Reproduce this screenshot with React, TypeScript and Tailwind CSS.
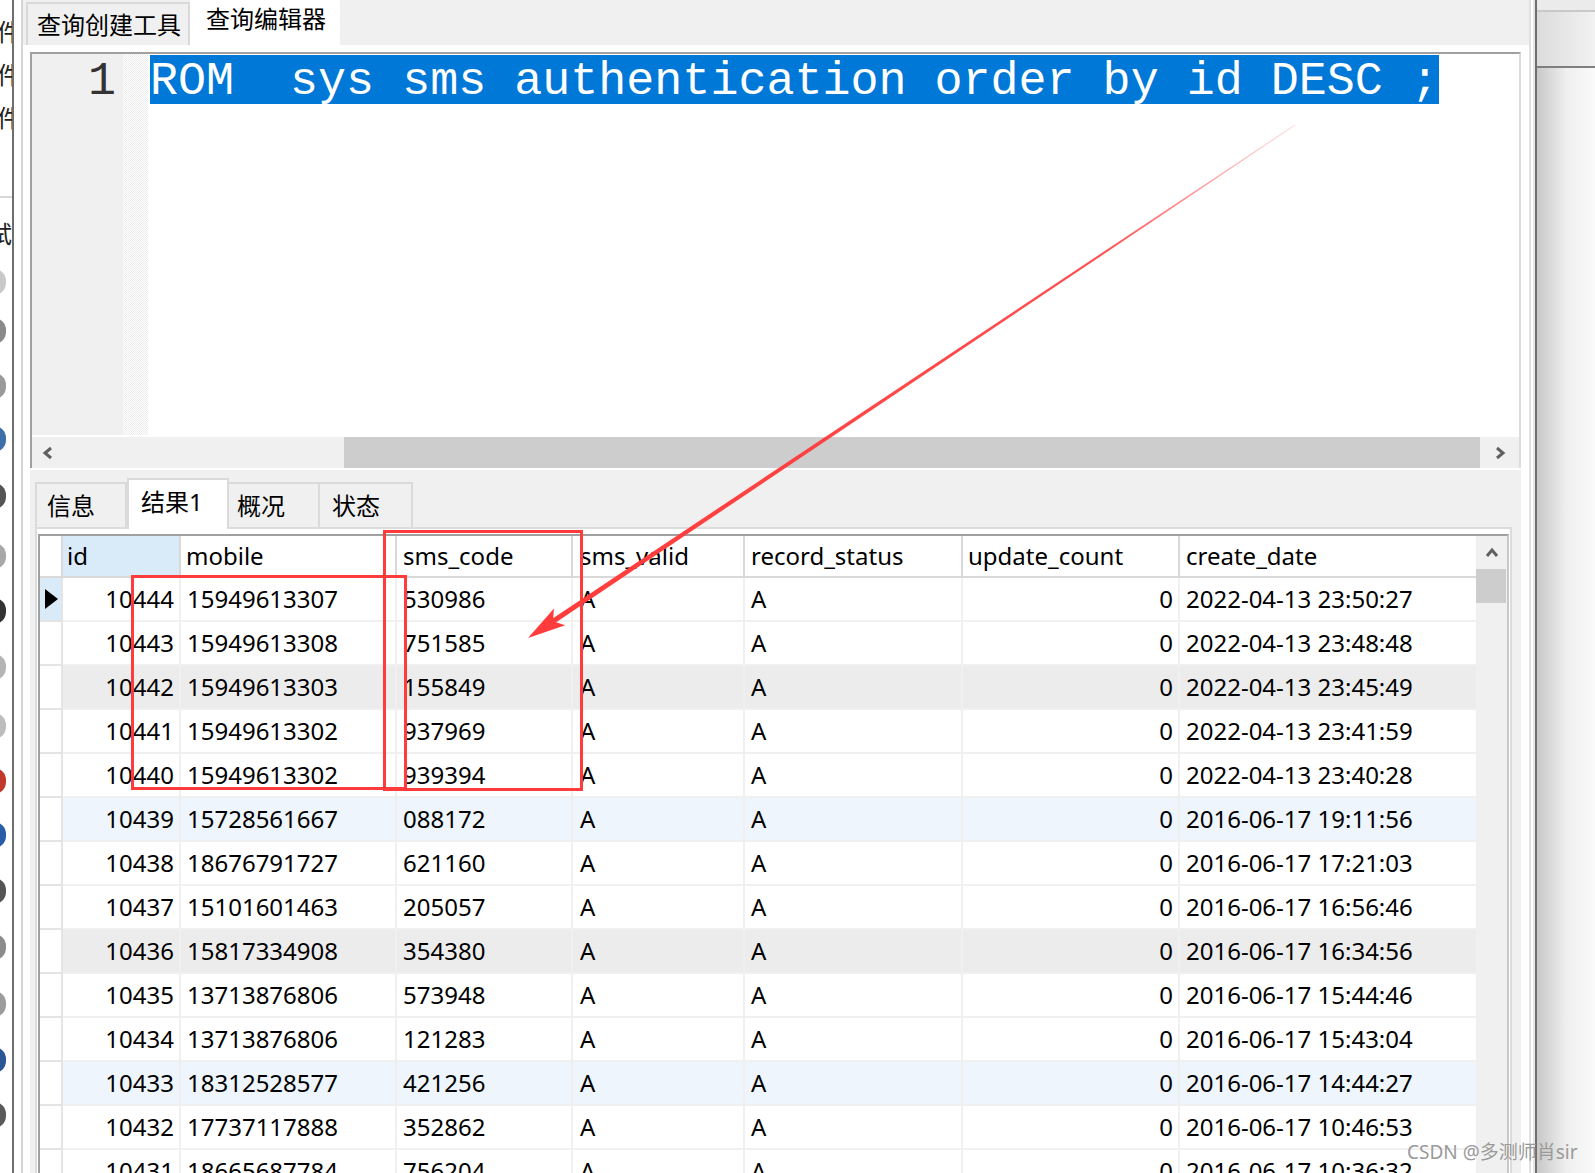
import React from "react";

const rows: [string, string, string, string][] = [
  ["10444", "15949613307", "530986", "2022-04-13 23:50:27"],
  ["10443", "15949613308", "751585", "2022-04-13 23:48:48"],
  ["10442", "15949613303", "155849", "2022-04-13 23:45:49"],
  ["10441", "15949613302", "937969", "2022-04-13 23:41:59"],
  ["10440", "15949613302", "939394", "2022-04-13 23:40:28"],
  ["10439", "15728561667", "088172", "2016-06-17 19:11:56"],
  ["10438", "18676791727", "621160", "2016-06-17 17:21:03"],
  ["10437", "15101601463", "205057", "2016-06-17 16:56:46"],
  ["10436", "15817334908", "354380", "2016-06-17 16:34:56"],
  ["10435", "13713876806", "573948", "2016-06-17 15:44:46"],
  ["10434", "13713876806", "121283", "2016-06-17 15:43:04"],
  ["10433", "18312528577", "421256", "2016-06-17 14:44:27"],
  ["10432", "17737117888", "352862", "2016-06-17 10:46:53"],
  ["10431", "18665687784", "756204", "2016-06-17 10:36:32"],
];

const rowBg: Record<number, string> = {
  2: "bg-[#ececec]",
  8: "bg-[#ececec]",
  5: "bg-[#eef5fd]",
  11: "bg-[#eef5fd]",
};

// partly hidden icons of the window behind, at the left edge
const sideIcons = [
  { h: "h-[40px]", c: "bg-[#c9c9c9]" },
  { h: "h-[57px]", c: "bg-[#8a8a8a]" },
  { h: "h-[53px]", c: "bg-[#9a9a9a]" },
  { h: "h-[53px]", c: "bg-[#3d6fa8]" },
  { h: "h-[62px]", c: "bg-[#555555]" },
  { h: "h-[57px]", c: "bg-[#a8a8a8]" },
  { h: "h-[53px]", c: "bg-[#333333]" },
  { h: "h-[60px]", c: "bg-[#b5b5b5]" },
  { h: "h-[57px]", c: "bg-[#bdbdbd]" },
  { h: "h-[53px]", c: "bg-[#c0392b]" },
  { h: "h-[56px]", c: "bg-[#2a5ca8]" },
  { h: "h-[56px]", c: "bg-[#555555]" },
  { h: "h-[56px]", c: "bg-[#8c8c8c]" },
  { h: "h-[57px]", c: "bg-[#9c9c9c]" },
  { h: "h-[55px]", c: "bg-[#2b5797]" },
  { h: "h-[55px]", c: "bg-[#5a5a5a]" },
];

function Chevron({ dir }: { dir: "left" | "right" | "up" }) {
  const pts =
    dir === "left" ? "9,2 3,7 9,12" : dir === "right" ? "3,2 9,7 3,12" : "2,9 7,3 12,9";
  return (
    <svg width={dir === "up" ? 14 : 12} height={dir === "up" ? 12 : 14} viewBox={dir === "up" ? "0 0 14 12" : "0 0 12 14"}>
      <polyline points={pts} fill="none" stroke="#606060" strokeWidth={3} />
    </svg>
  );
}

// the underscores of the selected line sit on the lower edge of the selection
function Us() {
  return <span className="relative top-[9px]">_</span>;
}

export default function App() {
  return (
    <div className="relative flex h-[1173px] w-[1595px] overflow-hidden bg-white font-['Noto_Sans','Noto_Sans_CJK_SC',sans-serif] text-black">
      {/* left edge of the window behind */}
      <div className="flex w-[12px] flex-col overflow-hidden bg-white text-[24px] leading-none text-[#222]">
        <div className="h-[20px]" />
        <div className="-ml-[3px] h-[43px] whitespace-nowrap">件</div>
        <div className="-ml-[3px] h-[43px] whitespace-nowrap">件</div>
        <div className="-ml-[3px] h-[90px] whitespace-nowrap">件</div>
        <div className="h-[2px] bg-[#d8d8d8]" />
        <div className="h-[24px]" />
        <div className="-ml-[12px] h-[40px] whitespace-nowrap">试</div>
        {sideIcons.map((s, i) => (
          <div key={i} className={`${s.h} flex items-center`}>
            <div className={`-ml-[18px] h-[26px] w-[24px] shrink-0 rounded-full ${s.c}`} />
          </div>
        ))}
      </div>
      <div className="w-[2px] bg-[#6e6e6e]" />

      {/* main window */}
      <div className="flex w-[1521px]">
        <div className="w-[7px] bg-white" />
        <div className="w-[2px] bg-[#d5d5d5]" />
        <div className="flex w-[1506px] flex-col">
          {/* top tabs */}
          <div className="flex h-[45px] items-end bg-[#f0f0f0] pl-[3px]">
            <div className="flex h-[43px] w-[164px] items-center border-2 border-b-0 border-[#d9d9d9] pl-[9px] text-[24px] leading-none">
              查询创建工具
            </div>
            <div className="flex h-[45px] w-[150px] items-start bg-white pl-[16px] pt-[7px] text-[24px] leading-none">
              查询编辑器
            </div>
          </div>

          {/* white frame */}
          <div className="flex min-h-0 flex-1 flex-col bg-white pl-[7px] pr-[8px] pt-[7px]">
            {/* editor */}
            <div className="flex h-[416px] flex-col border-l-2 border-r-2 border-t-2 border-l-[#a0a0a0] border-r-[#dcdcdc] border-t-[#a0a0a0]">
              <div className="flex h-[381px]">
                <div className="w-[91px] bg-[#f0f0f0] pr-[7px] pt-[2px] text-right font-['Liberation_Mono',monospace] text-[46.7px] leading-[51px] text-[#333]">
                  1
                </div>
                <div className="w-[25px] bg-[repeating-conic-gradient(#ececec_0_25%,#ffffff_0_50%)] bg-[length:2px_2px]" />
                <div className="flex-1 overflow-hidden pl-[2px] pt-[1px]">
                  <span className="inline-block h-[49px] whitespace-pre bg-[#0078d7] font-['Liberation_Mono',monospace] text-[46.7px] leading-[53px] text-white">
                    ROM  sys<Us />sms<Us />authentication order by id DESC ;
                  </span>
                </div>
              </div>
              <div className="h-[2px] bg-white" />
              <div className="flex h-[31px] bg-[#f0f0f0]">
                <div className="flex w-[32px] items-center justify-center">
                  <Chevron dir="left" />
                </div>
                <div className="flex flex-1 pl-[280px]">
                  <div className="h-full flex-1 bg-[#cdcdcd]" />
                </div>
                <div className="flex w-[39px] items-center justify-center">
                  <Chevron dir="right" />
                </div>
              </div>
            </div>

            {/* results */}
            <div className="mt-[2px] flex min-h-0 flex-1 flex-col bg-[#f0f0f0] pl-[5px]">
              <div className="mt-[8px] flex h-[49px] items-end text-[24px] leading-none">
                <div className="flex h-[45px] w-[92px] items-center border-2 border-b-0 border-[#dadada] pl-[10px]">信息</div>
                <div className="relative z-10 -mb-[2px] flex h-[51px] w-[102px] items-start border-2 border-b-0 border-[#dadada] bg-white pl-[12px] pt-[10px]">
                  结果1
                </div>
                <div className="flex h-[45px] w-[91px] items-center border-2 border-b-0 border-l-0 border-[#dadada] pl-[8px]">概况</div>
                <div className="flex h-[45px] w-[93px] items-center border-2 border-b-0 border-l-0 border-[#dadada] pl-[12px]">状态</div>
              </div>

              <div className="min-h-0 w-[1477px] flex-1 overflow-hidden border-2 border-b-0 border-[#dcdcdc] bg-white pl-[1px] pr-[1px] pt-[5px]">
                <div className="flex h-full border-l-2 border-r-2 border-t-2 border-l-[#a0a0a0] border-r-[#c8c8c8] border-t-[#a0a0a0]">
                  <div className="flex w-[1436px] flex-col text-[24px] leading-none">
                    {/* header */}
                    <div className="flex h-[42px] shrink-0 border-b-2 border-[#d9d9d9]">
                      <div className="w-[23px] border-r-2 border-[#d9d9d9]" />
                      <div className="flex w-[118px] items-center border-r-2 border-[#d9d9d9] bg-[#d9eaf9] pl-[4px]">id</div>
                      <div className="flex w-[216px] items-center border-r-2 border-[#d9d9d9] pl-[5px]">mobile</div>
                      <div className="flex w-[176px] items-center border-r-2 border-[#d9d9d9] pl-[6px]">sms_code</div>
                      <div className="flex w-[172px] items-center border-r-2 border-[#d9d9d9] pl-[7px]">sms_valid</div>
                      <div className="flex w-[218px] items-center border-r-2 border-[#d9d9d9] pl-[6px]">record_status</div>
                      <div className="flex w-[217px] items-center border-r-2 border-[#d9d9d9] pl-[5px]">update_count</div>
                      <div className="flex flex-1 items-center pl-[6px]">create_date</div>
                    </div>
                    {rows.map((r, i) => (
                      <div key={r[0]} className="flex h-[44px] shrink-0">
                        <div
                          className={`flex w-[23px] items-center border-b-2 border-r-2 border-[#e4e4e4] pl-[5px] ${
                            i === 0 ? "bg-[#d9eaf9]" : "bg-white"
                          }`}
                        >
                          {i === 0 && (
                            <svg width="13" height="20" viewBox="0 0 13 20">
                              <polygon points="0,0 13,10 0,20" fill="#000" />
                            </svg>
                          )}
                        </div>
                        <div className={`flex flex-1 border-b-2 border-[#f0f0f0] ${rowBg[i] ?? "bg-white"}`}>
                          <div className="flex w-[118px] items-center justify-end border-r-2 border-[#f0f0f0] pr-[5px]">{r[0]}</div>
                          <div className="flex w-[216px] items-center border-r-2 border-[#f0f0f0] pl-[6px]">{r[1]}</div>
                          <div className="flex w-[176px] items-center border-r-2 border-[#f0f0f0] pl-[6px]">{r[2]}</div>
                          <div className="flex w-[172px] items-center border-r-2 border-[#f0f0f0] pl-[7px]">A</div>
                          <div className="flex w-[218px] items-center border-r-2 border-[#f0f0f0] pl-[6px]">A</div>
                          <div className="flex w-[217px] items-center justify-end border-r-2 border-[#f0f0f0] pr-[5px]">0</div>
                          <div className="flex flex-1 items-center pl-[6px]">{r[3]}</div>
                        </div>
                      </div>
                    ))}
                  </div>
                  {/* vertical scrollbar */}
                  <div className="flex w-[31px] flex-col bg-[#f0f0f0]">
                    <div className="flex h-[33px] items-center justify-center">
                      <Chevron dir="up" />
                    </div>
                    <div className="mr-[1px] h-[34px] bg-[#cdcdcd]" />
                  </div>
                </div>
              </div>
            </div>
          </div>
        </div>
        <div className="w-[6px] border-l-2 border-r-2 border-l-[#e0e0e0] border-r-[#e6e6e6] bg-white" />
      </div>
      <div className="w-[2px] bg-[#6f6f6f]" />

      {/* right window behind */}
      <div className="flex flex-1 flex-col">
        <div className="h-[10px] bg-[#ebebeb]" />
        <div className="h-[2px] bg-[#c9c9c9]" />
        <div className="h-[54px] bg-linear-to-r from-[#dcdcdc] to-[#f2f2f2]" />
        <div className="h-[2px] bg-[#7f7f7f]" />
        <div className="flex-1 bg-linear-to-r from-[#c8c8c8] via-[#efefef] to-[#fafafa]" />
      </div>

      {/* annotations */}
      <svg className="pointer-events-none absolute left-0 top-0" width="1595" height="1173" viewBox="0 0 1595 1173">
        <defs>
          <linearGradient id="arrowFade" gradientUnits="userSpaceOnUse" x1="1295" y1="125" x2="528" y2="638">
            <stop offset="0" stopColor="#ff3b3b" stopOpacity="0.15" />
            <stop offset="0.25" stopColor="#ff3b3b" stopOpacity="0.9" />
            <stop offset="1" stopColor="#ff3b3b" stopOpacity="1" />
          </linearGradient>
        </defs>
        <rect x="132.5" y="576.5" width="273" height="212" fill="none" stroke="#ff3b3b" strokeWidth="3" />
        <rect x="384.5" y="531.5" width="197" height="258" fill="none" stroke="#ff3b3b" strokeWidth="3" />
        <polygon
          points="1295.3,125.4 554.3,623.4 551.5,619.2 1294.7,124.6"
          fill="url(#arrowFade)"
        />
        <polygon points="528,638 565.2,625.2 552.9,621.3 554,608.6" fill="#ff3b3b" />
      </svg>

      <div className="absolute left-[1407px] top-[1143px] whitespace-nowrap text-[19px] leading-none text-[#9a9a9a]">
        CSDN @多测师肖sir
      </div>
    </div>
  );
}
